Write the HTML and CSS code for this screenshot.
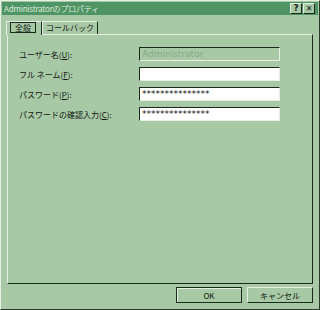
FILE: index.html
```html
<!DOCTYPE html>
<html lang="ja">
<head>
    <meta charset="UTF-8">
    <title>Administratorのプロパティ</title>
    <link rel="stylesheet" href="styles.css">
</head>
<body>
    <div class="window">
        <div class="titlebar">
            <span class="title">Administratorのプロパティ</span>
            <div class="title-buttons">
                <span class="tbtn">?</span>
                <span class="tbtn">✕</span>
            </div>
        </div>
        <div class="tabs">
            <div class="tab active"><span class="focus">全般</span></div>
            <div class="tab">コールバック</div>
        </div>
        <div class="panel">
            <div class="row">
                <label>ユーザー名(<u>U</u>):</label>
                <div class="field disabled">Administrator</div>
            </div>
            <div class="row">
                <label>フル ネーム(<u>F</u>):</label>
                <div class="field"></div>
            </div>
            <div class="row">
                <label>パスワード(<u>P</u>):</label>
                <div class="field">***************</div>
            </div>
            <div class="row">
                <label>パスワードの確認入力(<u>C</u>):</label>
                <div class="field">***************</div>
            </div>
        </div>
        <div class="footer">
            <button class="btn default">OK</button>
            <button class="btn">キャンセル</button>
        </div>
    </div>
</body>
</html>
```

FILE: styles.css
```css
body {
    margin: 0;
    background-color: #a8c9a6;
    font-family: "Noto Sans CJK JP", "DejaVu Sans", sans-serif;
    font-size: 8px;
    color: #101810;
}
.window {
    width: 320px;
    height: 310px;
    box-sizing: border-box;
    border-left: 1px solid #e4f0e2;
    border-top: 1px solid #e4f0e2;
    border-right: 1px solid #2a3a2a;
    border-bottom: 1px solid #2a3a2a;
    padding: 1px;
    background-color: #a8c9a6;
}
.titlebar {
    height: 13px;
    background-color: #4f9464;
    display: flex;
    align-items: center;
    justify-content: space-between;
    padding-left: 2px;
    padding-right: 3px;
}
.title {
    color: #dcecd8;
    font-family: "Noto Sans CJK JP", "DejaVu Sans", sans-serif;
    font-size: 8px;
    letter-spacing: -0.2px;
}
.title-buttons {
    display: flex;
    gap: 1px;
}
.tbtn {
    width: 10px;
    height: 9px;
    background-color: #a8c9a6;
    border-left: 1px solid #e4f0e2;
    border-top: 1px solid #e4f0e2;
    border-right: 1px solid #1a2a1a;
    border-bottom: 1px solid #1a2a1a;
    font-family: "DejaVu Sans", sans-serif;
    font-size: 8px;
    font-weight: bold;
    line-height: 9px;
    text-align: center;
    color: #101810;
}
.tabs {
    display: flex;
    align-items: flex-end;
    margin-top: 4px;
    padding-left: 4px;
    height: 15px;
}
.tab {
    height: 12px;
    padding: 0 3px;
    border-top: 1px solid #e4f0e2;
    border-left: 1px solid #e4f0e2;
    border-right: 1px solid #1a2a1a;
    line-height: 12px;
    white-space: nowrap;
}
.tab.active {
    height: 14px;
    width: 36px;
    box-sizing: border-box;
    padding: 0 0 0 3px;
    margin-bottom: -1px;
    background-color: #a8c9a6;
    position: relative;
    z-index: 1;
}
.focus {
    display: inline-block;
    border: 1px solid #1a2a1a;
    padding: 0 4px;
    line-height: 9px;
}
.panel {
    margin-left: 5px;
    width: 306px;
    height: 250px;
    box-sizing: border-box;
    border-top: 1px solid #e4f0e2;
    border-left: 1px solid #e4f0e2;
    border-right: 1px solid #1a2a1a;
    border-bottom: 1px solid #1a2a1a;
    padding: 12px 0 0 11px;
    display: flex;
    flex-direction: column;
    gap: 6px;
}
.row {
    display: flex;
    align-items: center;
    height: 14px;
}
.row label {
    width: 120px;
}
.field {
    width: 141px;
    height: 14px;
    box-sizing: border-box;
    background-color: #fff;
    border-top: 1px solid #1a2a1a;
    border-left: 1px solid #1a2a1a;
    border-right: 1px solid #e4f0e2;
    border-bottom: 1px solid #e4f0e2;
    padding-left: 2px;
    line-height: 13px;
    font-family: "DejaVu Sans", sans-serif;
    font-size: 9px;
    overflow: hidden;
}
.field.disabled {
    background-color: #a8c9a6;
    color: #86a886;
}
.footer {
    display: flex;
    justify-content: flex-end;
    gap: 5px;
    margin-top: 3px;
    padding-right: 5px;
}
.btn {
    width: 66px;
    height: 16px;
    box-sizing: border-box;
    background-color: #a8c9a6;
    border-top: 1px solid #e4f0e2;
    border-left: 1px solid #e4f0e2;
    border-right: 1px solid #1a2a1a;
    border-bottom: 1px solid #1a2a1a;
    font-family: "Noto Sans CJK JP", "DejaVu Sans", sans-serif;
    font-size: 8px;
    color: #101810;
    padding: 0;
}
.btn.default {
    border: 1px solid #1a2a1a;
    box-shadow: inset 1px 1px 0 #e4f0e2;
}
```
